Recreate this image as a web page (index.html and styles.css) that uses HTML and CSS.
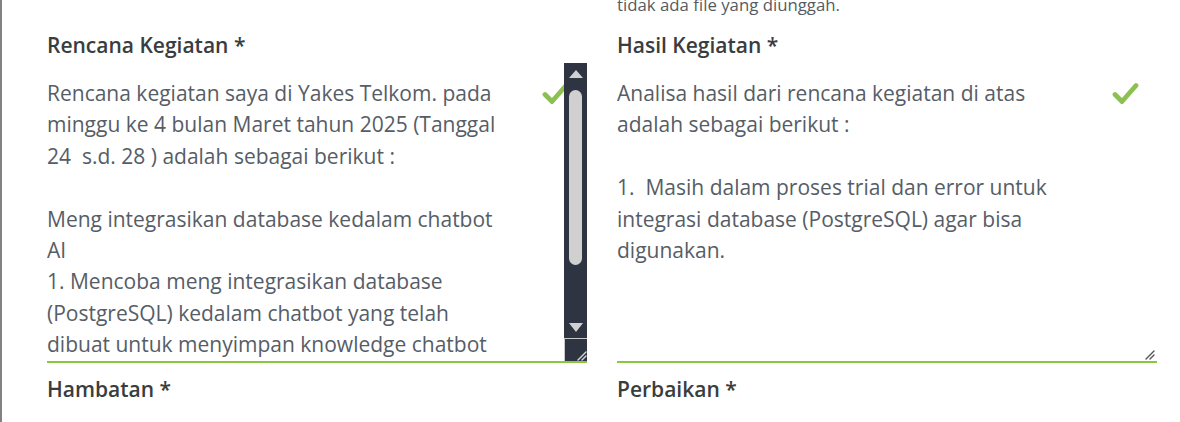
FILE: index.html
```html
<!DOCTYPE html>
<html lang="id">
<head>
<meta charset="utf-8">
<title>Form Kegiatan</title>
<link rel="stylesheet" href="styles.css">
</head>
<body>
<div class="page">
  <div class="cell"></div>
  <div class="cell"><p class="note">tidak ada file yang diunggah.</p></div>

  <div class="field">
    <label class="label">Rencana Kegiatan *</label>
    <div class="area">
      <div class="area-text">Rencana kegiatan saya di Yakes Telkom. pada
minggu ke 4 bulan Maret tahun 2025 (Tanggal
24  s.d. 28 ) adalah sebagai berikut :

Meng integrasikan database kedalam chatbot
AI
1. Mencoba meng integrasikan database
(PostgreSQL) kedalam chatbot yang telah
dibuat untuk menyimpan knowledge chatbot</div>
      <svg class="check" viewBox="0 0 27 23" width="27" height="23"><path d="M3 12.5 L10 19.5 L24 3.5" fill="none" stroke="#8cc152" stroke-width="4.8" stroke-linecap="round" stroke-linejoin="round"/></svg>
      <div class="scrollbar">
        <div class="sb-track">
          <span class="sb-up"></span>
          <span class="sb-thumb"></span>
          <span class="sb-down"></span>
        </div>
        <div class="sb-corner">
          <svg viewBox="0 0 12 12" width="12" height="12"><path d="M3 11 L11 3 M7 11 L11 7" stroke="#d8d8d8" stroke-width="1.4" stroke-linecap="round"/></svg>
        </div>
      </div>
    </div>
  </div>

  <div class="field">
    <label class="label">Hasil Kegiatan *</label>
    <div class="area">
      <div class="area-text">Analisa hasil dari rencana kegiatan di atas
adalah sebagai berikut :

1.  Masih dalam proses trial dan error untuk
integrasi database (PostgreSQL) agar bisa
digunakan.</div>
      <svg class="check" viewBox="0 0 27 23" width="27" height="23"><path d="M3 12.5 L10 19.5 L24 3.5" fill="none" stroke="#8cc152" stroke-width="4.8" stroke-linecap="round" stroke-linejoin="round"/></svg>
      <svg class="grip" viewBox="0 0 12 12" width="12" height="12"><path d="M2 11 L10 3 M6 11 L10 7" stroke="#555" stroke-width="1.4" stroke-linecap="round"/></svg>
    </div>
  </div>

  <div class="field field-next">
    <label class="label">Hambatan *</label>
  </div>
  <div class="field field-next">
    <label class="label">Perbaikan *</label>
  </div>
</div>
</body>
</html>
```

FILE: styles.css
```css
html, body {
  margin: 0;
  padding: 0;
  background: #ffffff;
}

body {
  font-family: "Open Sans", "Noto Sans", sans-serif;
  overflow: hidden;
  height: 422px;
}

.page {
  box-sizing: border-box;
  height: 422px;
  border-left: 2px solid #828282;
  padding-left: 45px;
  display: grid;
  grid-template-columns: 540px 540px;
  grid-template-rows: 20px auto auto;
  column-gap: 30px;
  align-content: start;
}

.cell {
  min-width: 0;
}

.note {
  margin: -7px 0 0 0;
  font-size: 16.8px;
  line-height: 24px;
  color: #555b63;
}

.field {
  display: flex;
  flex-direction: column;
  padding-top: 13px;
}

.field-next {
  padding-top: 14px;
}

.label {
  font-size: 21px;
  font-weight: 600;
  line-height: 25px;
  color: #3a3d40;
}

.area {
  position: relative;
  margin-top: 5px;
  height: 298px;
  border-bottom: 2px solid #8cc63f;
  display: flex;
}

.area-text {
  flex: 1;
  min-width: 0;
  padding-top: 15px;
  font-size: 21px;
  line-height: 31.4px;
  color: #565d66;
  white-space: pre;
  overflow: hidden;
}

.check {
  position: absolute;
  right: 18px;
  top: 19px;
}

.scrollbar {
  position: relative;
  z-index: 1;
  width: 23px;
  background: #2e3442;
  display: flex;
  flex-direction: column;
}

.sb-track {
  flex: 1;
  display: flex;
  flex-direction: column;
  align-items: center;
  padding-top: 7px;
}

.sb-up {
  width: 0;
  height: 0;
  border-left: 7.5px solid transparent;
  border-right: 7.5px solid transparent;
  border-bottom: 8px solid #d0d0d0;
}

.sb-thumb {
  margin-top: 12px;
  width: 13px;
  height: 175px;
  border-radius: 7px;
  background: #d0d0d0;
}

.sb-down {
  margin-top: 58px;
  width: 0;
  height: 0;
  border-left: 7.5px solid transparent;
  border-right: 7.5px solid transparent;
  border-top: 9px solid #d0d0d0;
}

.sb-corner {
  height: 22px;
  border-top: 1px solid #c8c8c8;
  border-left: 1px solid #c8c8c8;
  display: flex;
  align-items: flex-end;
  justify-content: flex-end;
}

.sb-corner svg {
  display: block;
}

.grip {
  position: absolute;
  right: 1px;
  bottom: 1px;
}
```
